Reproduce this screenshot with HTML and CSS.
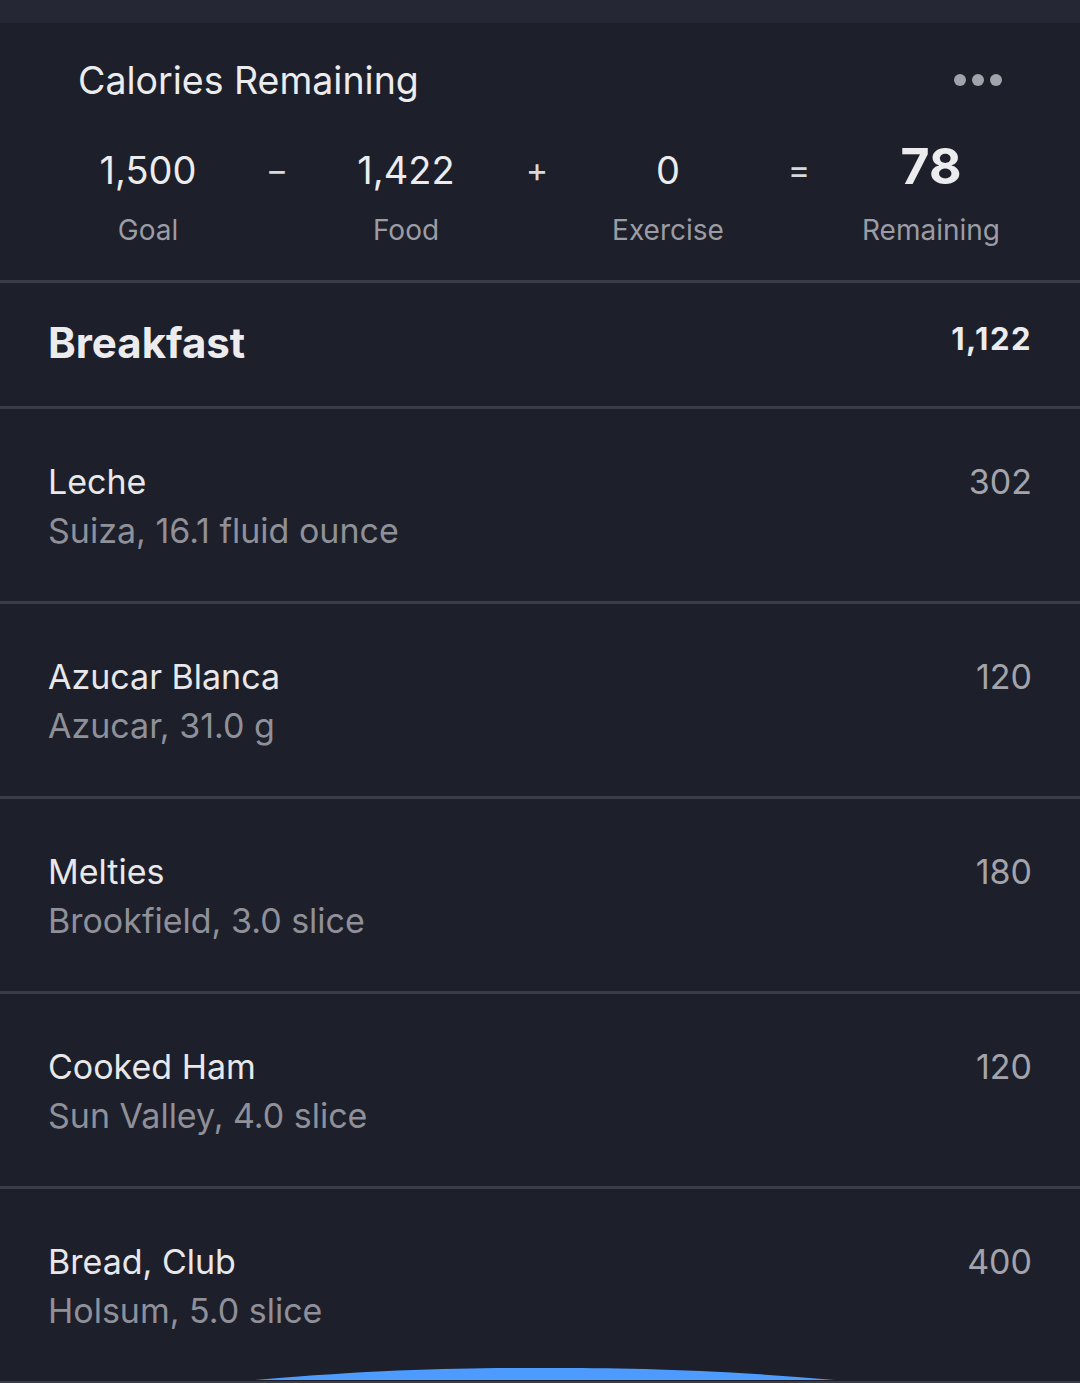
FILE: index.html
```html
<!DOCTYPE html>
<html lang="en">
<head>
<meta charset="utf-8">
<title>Calories Remaining</title>
<link rel="stylesheet" href="styles.css">
</head>
<body>
<div class="page">
  <div class="topbar"></div>
  <section class="summary">
    <div class="summary-head">
      <h2 class="summary-title">Calories Remaining</h2>
      <div class="dots"><span></span><span></span><span></span></div>
    </div>
    <div class="stats">
      <div class="val">1,500</div>
      <div class="op">&minus;</div>
      <div class="val">1,422</div>
      <div class="op">+</div>
      <div class="val">0</div>
      <div class="op">=</div>
      <div class="val val-strong">78</div>
      <div class="lbl">Goal</div>
      <div></div>
      <div class="lbl">Food</div>
      <div></div>
      <div class="lbl">Exercise</div>
      <div></div>
      <div class="lbl">Remaining</div>
    </div>
  </section>
  <section class="meal">
    <div class="meal-head">
      <h3 class="meal-title">Breakfast</h3>
      <div class="meal-total">1,122</div>
    </div>
    <div class="item">
      <div class="item-text">
        <div class="item-name">Leche</div>
        <div class="item-desc">Suiza, 16.1 fluid ounce</div>
      </div>
      <div class="item-cal">302</div>
    </div>
    <div class="item">
      <div class="item-text">
        <div class="item-name">Azucar Blanca</div>
        <div class="item-desc">Azucar, 31.0 g</div>
      </div>
      <div class="item-cal">120</div>
    </div>
    <div class="item">
      <div class="item-text">
        <div class="item-name">Melties</div>
        <div class="item-desc">Brookfield, 3.0 slice</div>
      </div>
      <div class="item-cal">180</div>
    </div>
    <div class="item">
      <div class="item-text">
        <div class="item-name">Cooked Ham</div>
        <div class="item-desc">Sun Valley, 4.0 slice</div>
      </div>
      <div class="item-cal">120</div>
    </div>
    <div class="item">
      <div class="item-text">
        <div class="item-name">Bread, Club</div>
        <div class="item-desc">Holsum, 5.0 slice</div>
      </div>
      <div class="item-cal">400</div>
    </div>
  </section>
  <svg class="fab-arc" width="1080" height="14" viewBox="0 0 1080 14" aria-hidden="true">
    <path d="M255 13 C385 2 465 1 545 1 C625 1 705 2 835 13 Z" fill="#4d9bff"/>
  </svg>
</div>
</body>
</html>
```

FILE: styles.css
```css
html, body {
  margin: 0;
  padding: 0;
  background: #1d1f2b;
}

body {
  font-family: Inter, "Noto Sans", "Liberation Sans", sans-serif;
  color: #e8e8ea;
}

.page {
  position: relative;
  width: 1080px;
  height: 1383px;
  overflow: hidden;
  background: #1d1f2b;
}

.topbar {
  height: 23px;
  background: #252834;
}

.summary {
  height: 260px;
  box-sizing: border-box;
  padding-top: 36px;
  border-bottom: 3px solid #3a3c48;
}

.summary-head {
  display: flex;
  align-items: center;
  justify-content: space-between;
  padding: 0 78px 0 78px;
}

.summary-title {
  margin: 0;
  font-size: 37.5px;
  line-height: 44px;
  font-weight: 400;
  color: #ececee;
}

.dots {
  display: flex;
  gap: 6px;
  margin-bottom: 2px;
}

.dots span {
  width: 12px;
  height: 12px;
  border-radius: 50%;
  background: #a2a3aa;
}

.stats {
  display: grid;
  grid-template-columns: 200px 58px 200px 62px 200px 62px 202px;
  grid-template-rows: 56px 36px;
  align-items: baseline;
  padding: 0 0 0 48px;
  margin-top: 35px;
  row-gap: 18px;
}

.val, .op, .lbl {
  text-align: center;
}

.val {
  font-size: 38px;
  line-height: 56px;
  color: #ececee;
}

.val-strong {
  font-size: 50px;
  font-weight: 700;
}

.op {
  align-self: start;
  font-size: 34px;
  line-height: 64px;
  color: #d8d8dc;
}

.lbl {
  font-size: 28px;
  line-height: 36px;
  color: #9b9ca4;
}

.meal-head {
  display: flex;
  justify-content: space-between;
  align-items: flex-start;
  height: 126px;
  box-sizing: border-box;
  padding: 35px 48px 0 48px;
  border-bottom: 3px solid #3a3c48;
}

.meal-title {
  margin: 0;
  font-size: 42px;
  line-height: 50px;
  font-weight: 700;
  color: #ececee;
}

.meal-total {
  margin-top: 3px;
  font-size: 31px;
  line-height: 36px;
  font-weight: 700;
  letter-spacing: 1.5px;
  color: #ececee;
}

.item {
  display: flex;
  justify-content: space-between;
  align-items: flex-start;
  height: 195px;
  box-sizing: border-box;
  padding: 48px 48px 0 48px;
  border-bottom: 3px solid #3a3c48;
}

.item-name, .item-desc, .item-cal {
  font-size: 34px;
  line-height: 49px;
}

.item-name {
  color: #e8e8ea;
}

.item-desc {
  color: #8f9098;
}

.item-cal {
  color: #a3a4ab;
}

.fab-arc {
  position: absolute;
  left: 0;
  bottom: 2px;
  display: block;
}
```
